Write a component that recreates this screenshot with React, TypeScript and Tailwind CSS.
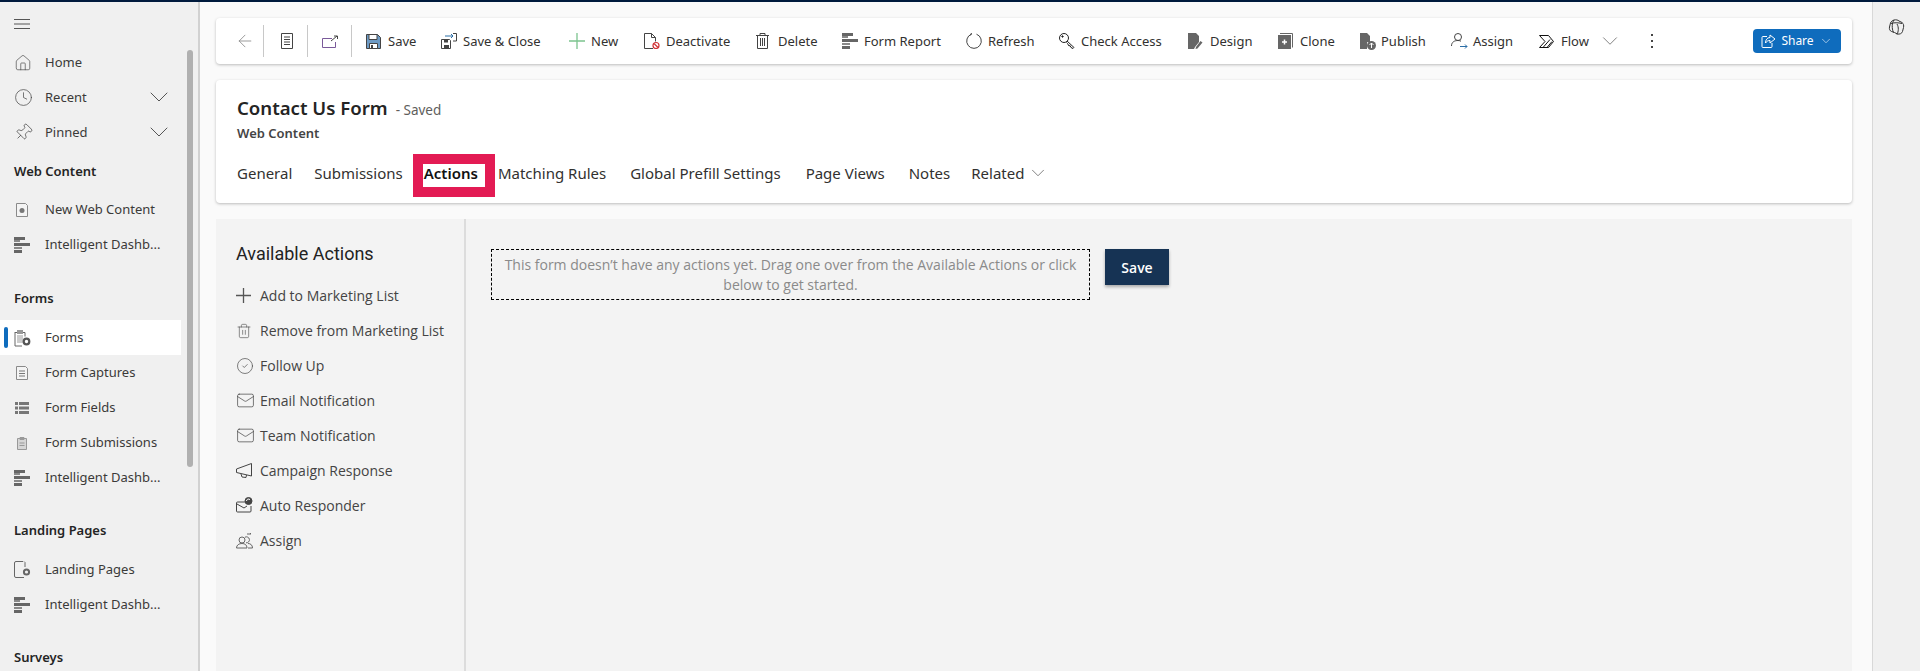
import { ChevronDown, House, Clock, Pin, Trash2, CircleCheck, Mail, ArrowLeft } from "lucide-react";
import type { ReactNode } from "react";

const ui = "font-['Noto_Sans','Open_Sans',sans-serif]";

const Bars = () => (
  <svg width="16" height="16" viewBox="0 0 16 16" fill="#666">
    <rect x="0" y="0" width="11" height="3" />
    <rect x="0" y="3" width="6" height="2" fill="#888" />
    <rect x="0" y="6" width="16" height="3" />
    <rect x="0" y="10" width="8" height="2" fill="#888" />
    <rect x="0" y="13" width="8" height="3" />
  </svg>
);

const FormGear = () => (
  <svg width="17" height="18" viewBox="0 0 17 18" fill="none">
    <path d="M1 3.500h2M9 3.500h2v4M1 3v14h7" stroke="#666" strokeWidth="1" />
    <rect x="3" y="1" width="6" height="4" fill="#999" />
    <rect x="3" y="6" width="6" height="8" fill="#ccc" />
    <circle cx="12.500" cy="12.500" r="2.800" stroke="#555" strokeWidth="2.200" />
  </svg>
);

const GrayDoc = ({ children }: { children: ReactNode }) => (
  <svg width="16" height="16" viewBox="0 0 16 16" fill="none" stroke="#8a8a8a">
    <path d="M2.500 1.500h9l2 2v11h-11z" fill="#f4f4f4" />
    {children}
  </svg>
);

const LandingGear = () => (
  <svg width="17" height="17" viewBox="0 0 17 17" fill="none">
    <path d="M9 .500H2A1.500 1.500 0 0 0 .500 2v13A1.500 1.500 0 0 0 2 16.500h8M10 .500l1 1V6" stroke="#666" />
    <circle cx="12.500" cy="11" r="2.600" stroke="#666" strokeWidth="2" />
  </svg>
);

type NavItem = { label: string; icon: ReactNode; selected?: boolean };

const NavRow = ({ label, icon, selected }: NavItem) => (
  <div className={`relative flex h-[35px] w-[181px] items-center text-[13px] text-[#3b3a39] ${selected ? "bg-white" : ""}`}>
    {selected && <span className="absolute left-[4px] top-[7px] h-[21px] w-[4px] rounded-sm bg-[#0f6cbd]" />}
    <span className="ml-[14px] flex w-[31px] shrink-0 items-center">{icon}</span>
    <span className="whitespace-nowrap">{label}</span>
  </div>
);

const Heading = ({ children, className }: { children: ReactNode; className: string }) => (
  <div className={`pl-[14px] text-[13px] font-semibold leading-[18px] text-[#242424] ${className}`}>{children}</div>
);

const ExpandRow = ({ label, icon }: NavItem) => (
  <div className="relative">
    <NavRow label={label} icon={icon} />
    <ChevronDown className="absolute left-[143px] top-[1px]" size={32} strokeWidth={0.75} color="#555" />
  </div>
);

const Sidebar = () => (
  <aside className="relative w-[200px] shrink-0 overflow-hidden border-r-2 border-[#d1d1d1] bg-[#f0f0f0]">
    <div className="absolute left-[187px] top-[48px] h-[417px] w-[6px] rounded-sm bg-[#b0b0b0]" />
    <div className="flex h-[43px] items-start pl-[14px] pt-[17px]">
      <svg width="16" height="10" viewBox="0 0 16 10" stroke="#555">
        <path d="M0 .500h16M0 5h16M0 9.500h16" />
      </svg>
    </div>
    <NavRow label="Home" icon={<House size={18} strokeWidth={0.9} color="#444" />} />
    <ExpandRow label="Recent" icon={<Clock size={19} strokeWidth={0.9} color="#444" />} />
    <ExpandRow label="Pinned" icon={<Pin size={19} strokeWidth={0.9} color="#444" className="rotate-45" />} />
    <Heading className="mb-[12px] mt-[12px]">Web Content</Heading>
    <NavRow label="New Web Content" icon={<GrayDoc><circle cx="8" cy="8.500" r="2.500" fill="#777" stroke="none" /></GrayDoc>} />
    <NavRow label="Intelligent Dashb..." icon={<Bars />} />
    <Heading className="mb-[13px] mt-[27px]">Forms</Heading>
    <NavRow label="Forms" selected icon={<FormGear />} />
    <NavRow label="Form Captures" icon={<GrayDoc><path d="M5 6h6M5 8.500h6M5 11h6" stroke="#777" /></GrayDoc>} />
    <NavRow label="Form Fields" icon={
      <svg width="16" height="14" viewBox="0 0 16 14" fill="#777">
        <rect x="1" y="1" width="3" height="3" /><rect x="5" y="1" width="10" height="3" />
        <rect x="1" y="5.500" width="3" height="3" /><rect x="5" y="5.500" width="10" height="3" />
        <rect x="1" y="10" width="3" height="3" /><rect x="5" y="10" width="10" height="3" />
      </svg>
    } />
    <NavRow label="Form Submissions" icon={
      <svg width="16" height="16" viewBox="0 0 16 16" fill="#d6d6d6" stroke="#999">
        <path d="M3.500 3.500h9v11h-9z" /><path d="M6 2.500h4v2H6z" fill="#999" /><path d="M5.500 8h5M5.500 10.500h5" />
      </svg>
    } />
    <NavRow label="Intelligent Dashb..." icon={<Bars />} />
    <Heading className="mb-[13px] mt-[26px]">Landing Pages</Heading>
    <NavRow label="Landing Pages" icon={<LandingGear />} />
    <NavRow label="Intelligent Dashb..." icon={<Bars />} />
    <Heading className="mt-[26px]">Surveys</Heading>
  </aside>
);

const ic = { fill: "none", stroke: "#444", strokeWidth: 1 };

const toolbarItems: { label: string; cls: string; icon: ReactNode }[] = [
  { label: "Save", cls: "ml-[14px] w-[50px]", icon: (
    <svg width="15" height="15" viewBox="0 0 15 15" fill="#3f6f9e" stroke="#444"><path d="M.500.500h11l3 3v11H.500z" fill="#6d9ac4" /><path d="M3 .500h8v5H3z" fill="#fff" stroke="#444" /><path d="M3.500 9.500h8v5h-8z" fill="#fff" /><path d="M5 11h2v3H5z" fill="#444" stroke="none" /></svg>
  ) },
  { label: "Save & Close", cls: "ml-[25px] w-[103px]", icon: (
    <svg width="16" height="16" viewBox="0 0 16 16" fill="none" stroke="#444"><path d="M.500 6.500h8l1 1v8h-9z" fill="#fff" /><path d="M3 6.500h4v3H3zM3 12h5v3H3z" fill="#444" stroke="none" /><path d="M4 3h8m-2-2 2 2-2 2" stroke="#2b6ea6" /><path d="M12 .500h3.500V8H12" /></svg>
  ) },
  { label: "New", cls: "ml-[25px] w-[50px]", icon: (
    <svg width="16" height="16" viewBox="0 0 16 16" stroke="#7cc48f" strokeWidth="1.300"><path d="M8 0v16M0 8h16" /></svg>
  ) },
  { label: "Deactivate", cls: "ml-[25px] w-[87px]", icon: (
    <svg width="16" height="16" viewBox="0 0 16 16" fill="none" stroke="#444"><path d="M9 15.500H.500V.500h7l4 4v4M7.500.500v4h4" /><circle cx="12" cy="12.500" r="3" stroke="#d13438" strokeWidth="1.200" fill="#fff" /><path d="M10 10.500l4 4" stroke="#d13438" strokeWidth="1.200" /></svg>
  ) },
  { label: "Delete", cls: "ml-[25px] w-[62px]", icon: (
    <svg width="13" height="16" viewBox="0 0 13 16" {...ic}><path d="M0 2.500h13M4 2.500V.500h5v2M1.500 2.500v13h10v-13M4.500 5v8M6.500 5v8M8.500 5v8" /></svg>
  ) },
  { label: "Form Report", cls: "ml-[24px] w-[100px]", icon: <Bars /> },
  { label: "Refresh", cls: "ml-[24px] w-[69px]", icon: (
    <svg width="16" height="16" viewBox="0 0 16 16" fill="none" stroke="#444"><path d="M5.500 1.200A7.300 7.300 0 1 0 10.500 1.200M5.500 1.200 5 -.300M5.500 1.200 4 2" /></svg>
  ) },
  { label: "Check Access", cls: "ml-[24px] w-[105px]", icon: (
    <svg width="16" height="16" viewBox="0 0 16 16" fill="none" stroke="#222"><circle cx="5" cy="5" r="4.500" /><path d="M8 8l7 6.500-1 1-2-1-1-2-1 .500-1.500-2.500-1-1" /><circle cx="3.500" cy="3.500" r=".700" fill="#222" /></svg>
  ) },
  { label: "Design", cls: "ml-[24px] w-[66px]", icon: (
    <svg width="15" height="16" viewBox="0 0 15 16" fill="#666"><path d="M0 0h8l3 3v6l-4 5-1 2H0z" /><path d="M12.500 8l2 1.500-5 6-2 .500.500-2z" /></svg>
  ) },
  { label: "Clone", cls: "ml-[24px] w-[58px]", icon: (
    <svg width="15" height="16" viewBox="0 0 15 16"><path d="M2 .500h12.500v14" fill="none" stroke="#666" /><rect x="0" y="2" width="13" height="14" fill="#666" /><path d="M6.500 6.500v5M4 9h5" stroke="#fff" strokeWidth="1.500" /></svg>
  ) },
  { label: "Publish", cls: "ml-[23px] w-[68px]", icon: (
    <svg width="17" height="17" viewBox="0 0 17 17" fill="#666"><path d="M1 0h7l3 3v6H8v7H1z" /><circle cx="12.500" cy="12.500" r="4.500" /><path d="M12.500 15v-5m-2 2 2-2 2 2" stroke="#fff" fill="none" /></svg>
  ) },
  { label: "Assign", cls: "ml-[24px] w-[64px]", icon: (
    <svg width="17" height="17" viewBox="0 0 17 17" fill="none" stroke="#444"><circle cx="7" cy="4" r="3.500" /><path d="M.500 13c0-4 3-5.500 6.500-5.500 1 0 2 .200 3 .700" /><path d="M9 13.500h7m-2-2 2 2-2 2" stroke="#2b6ea6" /></svg>
  ) },
  { label: "Flow", cls: "ml-[24px] w-[65px]", icon: (
    <svg width="15" height="13" viewBox="0 0 15 13" fill="none" stroke="#111"><path d="M.500.500h9l5 6-5 6h-9l5.500-6z" /><path d="M4 12.500l7-8M8 12.500l5-6" /></svg>
  ) },
];

const Sep = ({ className }: { className: string }) => <span className={`h-[32px] w-px bg-[#c8c8c8] ${className}`} />;

const Toolbar = () => (
  <div className="flex h-[46px] items-center rounded-[4px] bg-white pl-[19px] text-[13px] text-[#323130] shadow-[0_1px_3px_rgba(0,0,0,0.25)]">
    <ArrowLeft size={20} strokeWidth={1} color="#888" />
    <Sep className="ml-[8px]" />
    <svg className="ml-[17px]" width="12" height="16" viewBox="0 0 12 16" fill="none" stroke="#444"><path d="M.500.500h11v15H.500zM3 4h6M3 6.500h6M3 9h6M3 11.500h6" /></svg>
    <Sep className="ml-[14px]" />
    <svg className="ml-[14px]" width="16" height="13" viewBox="0 0 16 13" fill="none"><path d="M10 3.500H.500v9h13V7" stroke="#7a5a9a" /><path d="M9 6l6-5m-3 0h3.500v3" stroke="#444" /></svg>
    <Sep className="ml-[13px]" />
    {toolbarItems.map((t) => (
      <div key={t.label} className={`flex items-center whitespace-nowrap ${t.cls}`}>
        <span className="flex w-[22px] shrink-0 items-center">{t.icon}</span>
        <span className="pt-[1px]">{t.label}</span>
      </div>
    ))}
    <ChevronDown className="-ml-[7px]" size={26} strokeWidth={0.75} color="#666" />
    <span className="ml-[28px] flex flex-col gap-[4px]">
      <i className="block h-[2px] w-[2px] bg-[#444]" />
      <i className="block h-[2px] w-[2px] bg-[#444]" />
      <i className="block h-[2px] w-[2px] bg-[#444]" />
    </span>
    <button className="ml-auto mr-[11px] flex h-[24px] w-[88px] items-center justify-center gap-[5px] rounded-[4px] bg-[#0f6cbd] text-[12px] text-white">
      <svg width="15" height="15" viewBox="0 0 15 15" fill="none" stroke="#fff"><path d="M6 2.500H2a1 1 0 0 0-1 1v9a1 1 0 0 0 1 1h8a1 1 0 0 0 1-1V9" /><path d="M9 1v2.500C6 3.500 4.500 6 4.500 9 6 7 7 6.500 9 6.500V9l5-4z" /></svg>
      Share
      <ChevronDown size={14} strokeWidth={1} color="#fff" />
    </button>
  </div>
);

const tabs: { label: string; cls: string }[] = [
  { label: "General", cls: "" },
  { label: "Submissions", cls: "ml-[22px]" },
  { label: "Matching Rules", cls: "ml-[20px]" },
  { label: "Global Prefill Settings", cls: "ml-[24px]" },
  { label: "Page Views", cls: "ml-[25px]" },
  { label: "Notes", cls: "ml-[24px]" },
  { label: "Related", cls: "ml-[21px]" },
];

const FormHeader = () => (
  <div className="mt-[16px] h-[123px] rounded-[4px] bg-white pl-[21px] pt-[14px] shadow-[0_1px_3px_rgba(0,0,0,0.25)]">
    <div className="flex items-baseline">
      <span className="text-[18.6px] font-semibold leading-[28px] text-[#242424]">Contact Us Form</span>
      <span className="ml-[8px] text-[13.5px] text-[#605e5c]">- Saved</span>
    </div>
    <div className="mt-[2px] text-[13px] font-semibold leading-[18px] text-[#444]">Web Content</div>
    <div className="mt-[19px] flex h-[24px] items-center text-[15px] text-[#323130]">
      {tabs.slice(0, 2).map((t) => <span key={t.label} className={t.cls}>{t.label}</span>)}
      <span className="relative ml-[21px] font-semibold text-[#111]">
        Actions
        <span className="absolute -bottom-[13px] -left-[11px] -right-[17px] -top-[8px] border-[10px] border-[#e31b54]" />
      </span>
      {tabs.slice(2).map((t) => <span key={t.label} className={t.cls}>{t.label}</span>)}
      <ChevronDown className="ml-[3px]" size={22} strokeWidth={0.8} color="#555" />
    </div>
  </div>
);

const envelope = <Mail size={19} strokeWidth={0.9} color="#444" />;

const actions: { label: string; icon: ReactNode }[] = [
  { label: "Add to Marketing List", icon: (
    <svg width="15" height="15" viewBox="0 0 15 15" stroke="#555" strokeWidth="1.300"><path d="M7.500 0v15M0 7.500h15" /></svg>
  ) },
  { label: "Remove from Marketing List", icon: <Trash2 size={16} strokeWidth={0.9} color="#444" /> },
  { label: "Follow Up", icon: <CircleCheck size={18} strokeWidth={0.9} color="#444" /> },
  { label: "Email Notification", icon: envelope },
  { label: "Team Notification", icon: envelope },
  { label: "Campaign Response", icon: (
    <svg width="16" height="15" viewBox="0 0 16 15" fill="none" stroke="#444"><path d="M.500 6 15.500.500v12.500L.500 9.500zM5 11l1 3 4 .500.500-2.500" /></svg>
  ) },
  { label: "Auto Responder", icon: (
    <svg width="17" height="17" viewBox="0 0 17 17" fill="none" stroke="#444"><path d="M9 5H1.500a1 1 0 0 0-1 1v8a1 1 0 0 0 1 1H14a1 1 0 0 0 1-1V9M1 7l7 4 3-2" /><circle cx="12.500" cy="4" r="3.500" fill="#444" /><path d="M10.500 4a2 2 0 0 1 3.500-1.300" stroke="#fff" /></svg>
  ) },
  { label: "Assign", icon: (
    <svg width="17" height="17" viewBox="0 0 17 17" fill="none" stroke="#666"><circle cx="6" cy="8" r="3" /><path d="M9 5.200a3 3 0 1 1 1 5.600" /><path d="M.500 16c0-3 2.500-4.500 5.500-4.500s5 1.500 5 4.500zM12 11.500c2.500 0 4.500 1.500 4.500 4.500H12M11 2h4m-1-1 1 1" /></svg>
  ) },
];

const ActionsPanel = () => (
  <div className="mt-[16px] flex flex-1 bg-[#f3f3f3] font-['Open_Sans',sans-serif]">
    <div className="w-[250px] shrink-0 border-r-2 border-[#dcdcdc] pl-[20px] pt-[25px]">
      <div className="mb-[14px] font-['Roboto',sans-serif] text-[18px] leading-[20px] text-[#222]">Available Actions</div>
      {actions.map((a) => (
        <div key={a.label} className="flex h-[35px] items-center whitespace-nowrap text-[14px] text-[#444]">
          <span className="flex w-[24px] shrink-0 items-center">{a.icon}</span>
          {a.label}
        </div>
      ))}
    </div>
    <div className="flex items-start pl-[25px] pt-[30px]">
      <div className="flex h-[51px] w-[599px] items-center justify-center border border-dashed border-black px-[10px] text-center text-[14px] leading-[20px] text-[#8a8a8a]">
        This form doesn’t have any actions yet. Drag one over from the Available Actions or click below to get started.
      </div>
      <button className="ml-[15px] h-[36px] w-[64px] bg-[#163354] text-[14px] font-semibold text-white shadow-[0_2px_3px_rgba(0,0,0,0.3)]">Save</button>
    </div>
  </div>
);

export default function App() {
  return (
    <div className={`flex h-[671px] w-[1920px] flex-col overflow-hidden bg-[#fafafa] ${ui}`}>
      <div className="h-[2px] shrink-0 bg-[#001a3d]" />
      <div className="flex min-h-0 flex-1">
        <Sidebar />
        <main className="flex min-w-0 flex-1 flex-col pl-[16px] pr-[20px] pt-[16px]">
          <Toolbar />
          <FormHeader />
          <ActionsPanel />
        </main>
        <aside className="flex w-[48px] shrink-0 justify-center border-l border-[#d8d8d8] bg-[#f0f0f0] pt-[17px]">
          <svg width="17" height="17" viewBox="0 0 17 17" fill="none" stroke="#333">
            <path d="M6 1c2-.5 4 0 5 1l3 1.500c1.500 1 2 3 1.500 5l-1 4c-.5 2-3 3-5 2.500l-3-1.500-3-1C2 12 1 10 1.500 8l1-4C3 2.500 4.500 1.500 6 1zM6 1c-2 3-2.500 8-.5 12.500M9 15.500c1.500-3 2-7 0-10.500M3 4.500c3-1 7-1 11 0" />
          </svg>
        </aside>
      </div>
    </div>
  );
}
